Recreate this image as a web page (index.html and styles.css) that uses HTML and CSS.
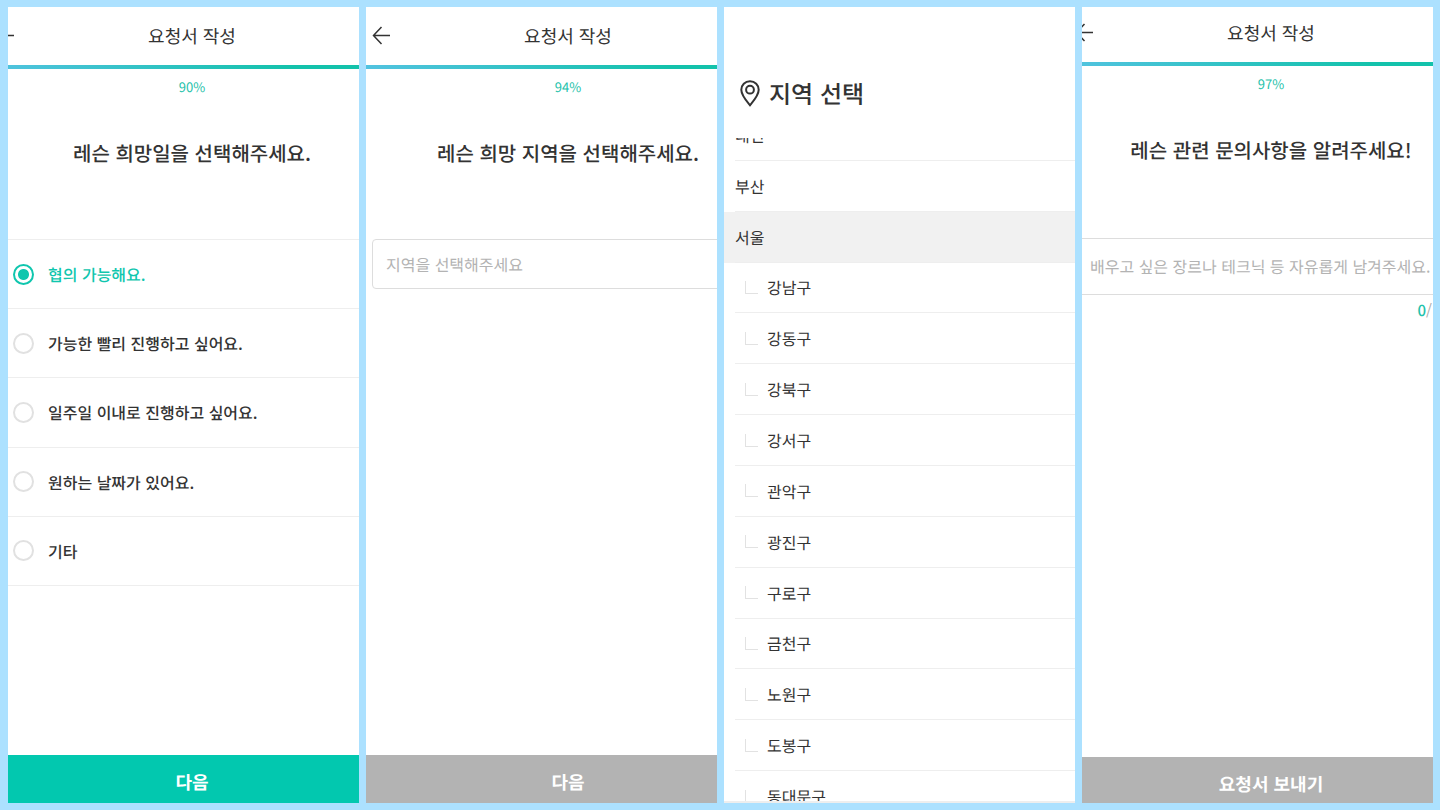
FILE: index.html
```html
<!DOCTYPE html>
<html lang="ko">
<head>
<meta charset="utf-8">
<title>요청서 작성</title>
<link rel="stylesheet" href="styles.css">
</head>
<body>
<main class="board">
  <section class="panel">
    <form class="screen screen-date">
      <header class="topbar">
        <button class="back" type="button" aria-label="뒤로"><svg viewBox="0 0 20 20" width="20" height="20"><path d="M9.500 1 1.500 9.500l8 8.500M1.500 9.500H18"/></svg></button>
        <h1 class="topbar-title">요청서 작성</h1>
      </header>
      <div class="progress"></div>
      <p class="percent">90%</p>
      <h2 class="question">레슨 희망일을 선택해주세요.</h2>
      <div class="options">
        <label class="option"><input class="radio" type="radio" name="date" checked><span>협의 가능해요.</span></label>
        <label class="option"><input class="radio" type="radio" name="date"><span>가능한 빨리 진행하고 싶어요.</span></label>
        <label class="option"><input class="radio" type="radio" name="date"><span>일주일 이내로 진행하고 싶어요.</span></label>
        <label class="option"><input class="radio" type="radio" name="date"><span>원하는 날짜가 있어요.</span></label>
        <label class="option"><input class="radio" type="radio" name="date"><span>기타</span></label>
      </div>
      <button class="submit submit-active" type="button">다음</button>
    </form>
  </section>

  <section class="panel">
    <form class="screen">
      <header class="topbar">
        <button class="back" type="button" aria-label="뒤로"><svg viewBox="0 0 20 20" width="20" height="20"><path d="M9.500 1 1.500 9.500l8 8.500M1.500 9.500H18"/></svg></button>
        <h1 class="topbar-title">요청서 작성</h1>
      </header>
      <div class="progress"></div>
      <p class="percent">94%</p>
      <h2 class="question">레슨 희망 지역을 선택해주세요.</h2>
      <input class="field" type="text" aria-label="지역" placeholder="지역을 선택해주세요">
      <button class="submit" type="button">다음</button>
    </form>
  </section>

  <section class="panel region">
    <header class="region-head">
      <svg class="pin" viewBox="0 0 20 27" width="20" height="27"><path d="M10 1.300C5 1.300 1.300 5 1.300 9.800c0 5.500 4.500 10.500 8.700 15.500 4.200-5 8.700-10 8.700-15.500C18.700 5 15 1.300 10 1.300Z"/><circle cx="10" cy="9.700" r="3.900"/></svg>
      <h2 class="region-title">지역 선택</h2>
    </header>
    <div class="region-scroll">
      <ul class="region-list">
        <li class="city"><button type="button">대전</button></li>
        <li class="city"><button type="button">부산</button></li>
        <li class="city city-open"><button type="button">서울</button></li>
        <li class="district"><button type="button">강남구</button></li>
        <li class="district"><button type="button">강동구</button></li>
        <li class="district"><button type="button">강북구</button></li>
        <li class="district"><button type="button">강서구</button></li>
        <li class="district"><button type="button">관악구</button></li>
        <li class="district"><button type="button">광진구</button></li>
        <li class="district"><button type="button">구로구</button></li>
        <li class="district"><button type="button">금천구</button></li>
        <li class="district"><button type="button">노원구</button></li>
        <li class="district"><button type="button">도봉구</button></li>
        <li class="district"><button type="button">동대문구</button></li>
      </ul>
    </div>
  </section>

  <section class="panel">
    <form class="screen screen-note">
      <header class="topbar">
        <button class="back" type="button" aria-label="뒤로"><svg viewBox="0 0 20 20" width="20" height="20"><path d="M9.500 1 1.500 9.500l8 8.500M1.500 9.500H18"/></svg></button>
        <h1 class="topbar-title">요청서 작성</h1>
      </header>
      <div class="progress"></div>
      <p class="percent">97%</p>
      <h2 class="question">레슨 관련 문의사항을 알려주세요!</h2>
      <input class="field field-note" type="text" aria-label="문의사항" placeholder="배우고 싶은 장르나 테크닉 등 자유롭게 남겨주세요.">
      <p class="counter"><b>0</b>/</p>
      <button class="submit" type="button">요청서 보내기</button>
    </form>
  </section>
</main>
</body>
</html>
```
FILE: styles.css
```css
* {
  box-sizing: border-box;
}

body {
  margin: 0;
  background: #ace1ff;
  color: #333;
  font-family: "Noto Sans CJK KR", sans-serif;
  font-size: 16px;
  line-height: 24px;
  text-rendering: geometricPrecision;
}

h1, h2, p, ul {
  margin: 0;
  padding: 0;
}

button, input {
  font: inherit;
  color: inherit;
  text-rendering: inherit;
}

button {
  border: 0;
  padding: 0;
  background: none;
}

.board {
  display: grid;
  grid-template-columns: repeat(4, minmax(0, 1fr));
  grid-template-rows: minmax(0, 1fr);
  gap: 7px;
  height: 100vh;
  padding: 7px 7px 7px 8px;
}

.panel {
  display: flex;
  overflow: hidden;
  background: #fff;
}

/* Each form is wider than its panel, which crops it */
.screen {
  display: flex;
  flex: none;
  flex-direction: column;
  width: calc(100% + 53px);
  margin-bottom: -6px;
}

.screen-date {
  margin-left: -18px;
}

.screen-note {
  margin-left: -13px;
  margin-bottom: -8px;
}

.topbar {
  display: grid;
  grid-template-columns: 20px 1fr 20px;
  align-items: center;
  height: 58px;
  padding: 0 6px;
}

.screen-note .topbar {
  height: 55px;
  padding-bottom: 3px;
}

.back {
  display: flex;
}

.back svg {
  fill: none;
  stroke: #333;
  stroke-width: 1.5;
}

.topbar-title {
  font-size: 18px;
  font-weight: 400;
  text-align: center;
}

.progress {
  height: 4px;
  background: linear-gradient(90deg, #52c3e0, #13c2ab 75%);
}

.percent {
  padding-top: 6px;
  color: #1fc2ab;
  font-size: 13px;
  text-align: center;
}

.question {
  padding: 38px 0 70px;
  font-size: 20px;
  font-weight: 500;
  line-height: 32px;
  text-align: center;
}

.screen-note .question {
  padding-bottom: 72px;
}

.options {
  display: grid;
  grid-auto-rows: 1fr;
  min-height: 347px;
  border-top: 1px solid #eee;
}

.option {
  display: flex;
  align-items: center;
  gap: 14px;
  padding-left: 23px;
  border-bottom: 1px solid #eee;
  font-weight: 500;
}

.option:has(:checked) {
  color: #0fc6ae;
}

.radio {
  appearance: none;
  width: 21px;
  height: 21px;
  margin: 0;
  border: 2px solid #e1e1e1;
  border-radius: 50%;
}

.radio:checked {
  border-color: #0fc6ae;
  background: radial-gradient(circle, #0fc6ae 5px, #fff 6px);
}

.field {
  height: 50px;
  margin: 0 6px;
  padding: 0 13px;
  border: 1px solid #ddd;
  border-radius: 4px;
  background: #fff;
}

.field-note {
  height: 57px;
  padding: 0 14px 2px;
}

.field::placeholder {
  color: #b3b3b3;
  opacity: 1;
}

.counter {
  padding: 4px 41px 0 0;
  color: #aaa;
  font-size: 15px;
  text-align: right;
}

.counter b {
  color: #1fc2ab;
  font-weight: 500;
}

.submit {
  height: 54px;
  margin-top: auto;
  background: #b3b3b3;
  color: #fff;
  font-size: 18px;
  font-weight: 700;
}

.submit-active {
  background: #02c8af;
}

.region {
  flex-direction: column;
}

.region-head {
  display: flex;
  flex: none;
  align-items: center;
  gap: 9px;
  padding: 68px 16px 27px;
}

.pin {
  fill: none;
  stroke: #333;
  stroke-width: 2;
}

.region-title {
  font-size: 24px;
  font-weight: 500;
  line-height: 36px;
}

.region-scroll {
  flex: 1;
  min-height: 0;
  overflow: hidden;
  border-bottom: 2px solid #eee;
}

/* The list is scrolled part of a row down */
.region-list {
  display: grid;
  grid-auto-rows: 1fr;
  min-height: 712px;
  margin-top: -28px;
  list-style: none;
}

.city, .district {
  display: flex;
  padding-left: 11px;
}

.city button, .district button {
  display: flex;
  flex: 1;
  align-items: center;
  border-bottom: 1px solid #eee;
}

.city-open {
  background: #f1f1f1;
}

.district button {
  gap: 9px;
  padding-left: 10px;
}

.district button::before {
  content: "";
  width: 12px;
  height: 12px;
  border: solid #e2e2e2;
  border-width: 0 0 1px 1px;
}
```
